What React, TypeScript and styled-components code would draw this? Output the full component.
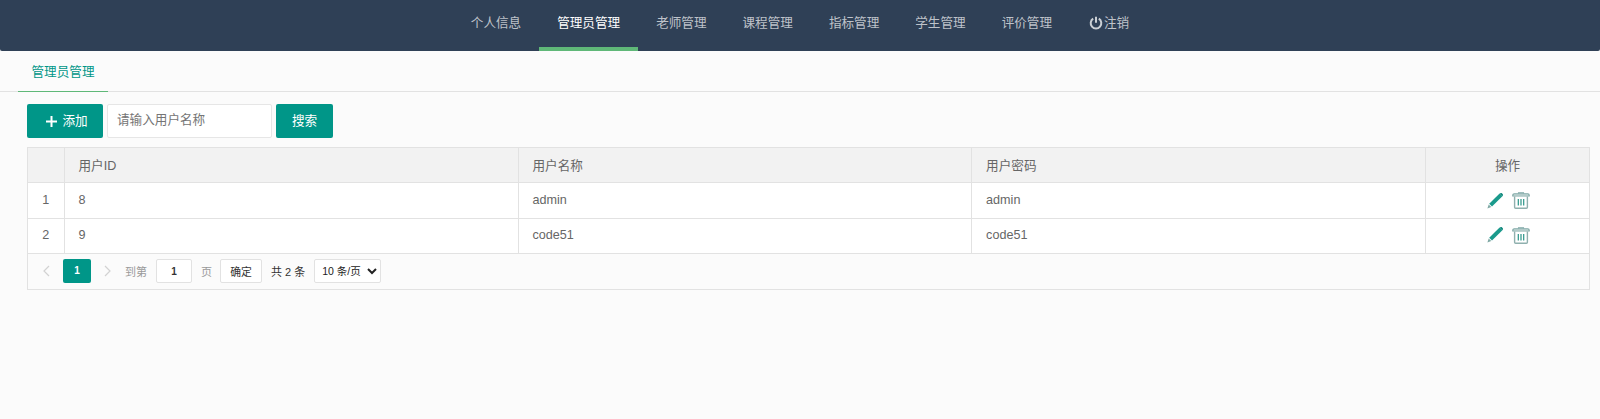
import React from "react";
import styled, { createGlobalStyle } from "styled-components";

const Global = createGlobalStyle`
  html, body { margin: 0; padding: 0; background: #fbfbfb; }
  body { font-family: "Liberation Sans", "Noto Sans CJK SC", sans-serif; font-size: 12.6px; color: #666; }
  * { box-sizing: border-box; }
`;

const Page = styled.div`
  width: 1600px;
  height: 419px;
  overflow: hidden;
  background: #fbfbfb;
`;

const Header = styled.header`
  height: 51px;
  background: #2f4056;
  border-radius: 0 0 2px 2px;
  display: flex;
  justify-content: center;
`;

const NavItem = styled.a<{ $active?: boolean }>`
  height: 51px;
  padding: 0 18px;
  line-height: 47px;
  font-size: 12.6px;
  color: ${(p) => (p.$active ? "#fff" : "rgba(255,255,255,.7)")};
  border-bottom: 4px solid ${(p) => (p.$active ? "#5fb878" : "transparent")};
  display: flex;
  align-items: center;
  white-space: nowrap;
`;

const PowerIcon = styled.svg`
  width: 16px;
  height: 16px;
  margin-top: -2px;
`;

const Tabs = styled.div`
  height: 41px;
  border-bottom: 1px solid #e2e2e2;
  padding-left: 18px;
`;

const Tab = styled.div`
  width: 90px;
  height: 41px;
  line-height: 42px;
  text-align: center;
  color: #009688;
  font-size: 12.6px;
  border-bottom: 1px solid #5fb878;
`;

const Content = styled.main`
  padding: 12px 10px 0 27px;
`;

const Toolbar = styled.div`
  display: flex;
  gap: 4px;
  height: 34px;
  margin-bottom: 9px;
`;

const Button = styled.button<{ $w: number }>`
  width: ${(p) => p.$w}px;
  height: 34px;
  border: 0;
  border-radius: 2px;
  background: #009688;
  color: #fff;
  font: inherit;
  font-size: 12.6px;
  padding: 0 0 3px;
  display: inline-flex;
  align-items: center;
  justify-content: center;
`;

const Plus = styled.svg`
  width: 11px;
  height: 11px;
  margin: 4px 5px 0 4px;
`;

const SearchInput = styled.input`
  width: 165px;
  height: 34px;
  border: 1px solid #e6e6e6;
  border-radius: 2px;
  background: #fff;
  padding: 0 9px 2px;
  font: inherit;
  font-size: 12.6px;
  color: #666;
  outline: none;
  &::placeholder { color: #757575; opacity: 1; }
`;

const Grid = styled.div`
  width: 1563px;
  border: 1px solid #e2e2e2;
  background: #fbfbfb;
`;

const DataTable = styled.table`
  width: 100%;
  table-layout: fixed;
  border-collapse: collapse;
  tbody tr:first-child td { height: 36px; }
  tbody tr:nth-child(2) td { padding-bottom: 2px; }
`;

const Th = styled.th<{ $center?: boolean; $last?: boolean }>`
  height: 34px;
  padding: 0 ${(p) => (p.$center ? 0 : 14)}px;
  background: #f2f2f2;
  font-weight: 400;
  font-size: 12.6px;
  color: #666;
  text-align: ${(p) => (p.$center ? "center" : "left")};
  border-right: ${(p) => (p.$last ? 0 : "1px solid #e2e2e2")};
  border-bottom: 1px solid #e2e2e2;
`;

const Td = styled.td<{ $center?: boolean; $last?: boolean }>`
  height: 35px;
  padding: 0 ${(p) => (p.$center ? 0 : 14)}px;
  background: #fff;
  font-size: 12.6px;
  color: #666;
  text-align: ${(p) => (p.$center ? "center" : "left")};
  border-right: ${(p) => (p.$last ? 0 : "1px solid #e2e2e2")};
  border-bottom: 1px solid #e2e2e2;
`;

const Actions = styled.div`
  display: flex;
  justify-content: center;
  align-items: center;
  gap: 9px;
  padding-top: 1px;
  padding-left: 2px;
`;

const Pager = styled.div`
  height: 35px;
  display: flex;
  align-items: center;
  padding-left: 14px;
  font-size: 11px;
  color: #999;
`;

const Arrow = styled.svg`
  width: 8px;
  height: 12px;
`;

const PageNum = styled.span`
  width: 28px;
  height: 24px;
  margin: 0 13px 0 13px;
  background: #009688;
  border-radius: 2px;
  color: #fff;
  font-weight: 700;
  font-size: 10px;
  line-height: 24px;
  text-align: center;
`;

const Label = styled.span<{ $ml: number; $dark?: boolean }>`
  margin-left: ${(p) => p.$ml}px;
  color: ${(p) => (p.$dark ? "#333" : "#999")};
  white-space: nowrap;
`;

const PageInput = styled.input`
  width: 36px;
  height: 24px;
  margin-left: 9px;
  border: 1px solid #e2e2e2;
  border-radius: 2px;
  background: #fff;
  text-align: center;
  font: inherit;
  font-size: 10px;
  font-weight: 700;
  color: #333;
  padding: 0;
`;

const Confirm = styled.button`
  width: 42px;
  height: 24px;
  margin-left: 8px;
  border: 1px solid #e2e2e2;
  border-radius: 2px;
  background: #fff;
  font: inherit;
  font-size: 10.8px;
  color: #333;
  padding: 0;
`;

const SizeSelect = styled.select`
  width: 67px;
  height: 24px;
  margin-left: 9px;
  border: 1px solid #e2e2e2;
  border-radius: 2px;
  background: #fff;
  font: inherit;
  font-size: 10.5px;
  color: #222;
  padding: 0 0 0 3px;
`;

const Pencil = () => (
  <svg width="16" height="16" viewBox="0 0 16 16" aria-hidden="true">
    <path d="M12.6 .6 15.4 3.2 5 13.4 2.2 10.8Z" fill="#1a9a8c" />
    <path d="M1.7 11.6 4.3 14.1 .4 15.6Z" fill="#7fa8a4" />
    <path d="M13.4 .3c.6-.4 1.2-.3 1.7.2l.6.6c.4.5.4 1.1 0 1.6l-.5.5-2.5-2.5Z" fill="#13897d" />
  </svg>
);

const Trash = () => (
  <svg width="18" height="17" viewBox="0 0 18 17" aria-hidden="true">
    <path d="M.8 3.3c0-1 .6-1.4 1.4-1.4h13.6c.8 0 1.4.4 1.4 1.4v.7H.8Z" stroke="#7fa8a6" strokeWidth="1.2" fill="#e6eeed" />
    <path d="M6.5 1.6V.8h5v.8" stroke="#7fa8a6" strokeWidth="1.1" fill="none" />
    <path d="M2.6 4.5v10.7c0 .6.4 1 1 1h10.8c.6 0 1-.4 1-1V4.5" stroke="#8fb0ae" strokeWidth="1.4" fill="none" />
    <path d="M6.3 7v6.6M9 7v6.6M11.7 7v6.6" stroke="#2a9488" strokeWidth="1.2" fill="none" />
  </svg>
);

const nav = ["个人信息", "管理员管理", "老师管理", "课程管理", "指标管理", "学生管理", "评价管理"];
const rows = [
  { n: 1, id: "8", name: "admin", pw: "admin" },
  { n: 2, id: "9", name: "code51", pw: "code51" },
];

export default function App() {
  return (
    <Page>
      <Global />
      <Header>
        {nav.map((t) => (
          <NavItem key={t} $active={t === "管理员管理"}>{t}</NavItem>
        ))}
        <NavItem>
          <PowerIcon viewBox="0 0 16 16" aria-hidden="true">
            <path d="M5.2 3.6a5.3 5.3 0 1 0 5.6 0" stroke="rgba(255,255,255,.75)" strokeWidth="2" fill="none" />
            <path d="M8 1.8v6" stroke="rgba(255,255,255,.75)" strokeWidth="2" fill="none" />
          </PowerIcon>
          注销
        </NavItem>
      </Header>
      <Tabs>
        <Tab>管理员管理</Tab>
      </Tabs>
      <Content>
        <Toolbar>
          <Button $w={76}>
            <Plus viewBox="0 0 11 11" aria-hidden="true">
              <path d="M5.5 0v11M0 5.5h11" stroke="#fff" strokeWidth="2" />
            </Plus>
            添加
          </Button>
          <SearchInput placeholder="请输入用户名称" />
          <Button $w={57}>搜索</Button>
        </Toolbar>
        <Grid>
          <DataTable>
            <colgroup>
              <col style={{ width: 36 }} />
              <col style={{ width: 454 }} />
              <col style={{ width: 453.6 }} />
              <col style={{ width: 454 }} />
              <col />
            </colgroup>
            <thead>
              <tr>
                <Th />
                <Th>用户ID</Th>
                <Th>用户名称</Th>
                <Th>用户密码</Th>
                <Th $center $last>操作</Th>
              </tr>
            </thead>
            <tbody>
              {rows.map((r) => (
                <tr key={r.n}>
                  <Td $center>{r.n}</Td>
                  <Td>{r.id}</Td>
                  <Td>{r.name}</Td>
                  <Td>{r.pw}</Td>
                  <Td $center $last>
                    <Actions>
                      <Pencil />
                      <Trash />
                    </Actions>
                  </Td>
                </tr>
              ))}
            </tbody>
          </DataTable>
          <Pager>
            <Arrow viewBox="0 0 8 12" aria-hidden="true">
              <path d="M7 1 2 6l5 5" stroke="#d2d2d2" strokeWidth="1.2" fill="none" />
            </Arrow>
            <PageNum>1</PageNum>
            <Arrow viewBox="0 0 8 12" aria-hidden="true">
              <path d="M1 1l5 5-5 5" stroke="#d2d2d2" strokeWidth="1.2" fill="none" />
            </Arrow>
            <Label $ml={13}>到第</Label>
            <PageInput defaultValue="1" />
            <Label $ml={9}>页</Label>
            <Confirm>确定</Confirm>
            <Label $ml={9} $dark>共 2 条</Label>
            <SizeSelect defaultValue="10">
              <option value="10">10 条/页</option>
            </SizeSelect>
          </Pager>
        </Grid>
      </Content>
    </Page>
  );
}
